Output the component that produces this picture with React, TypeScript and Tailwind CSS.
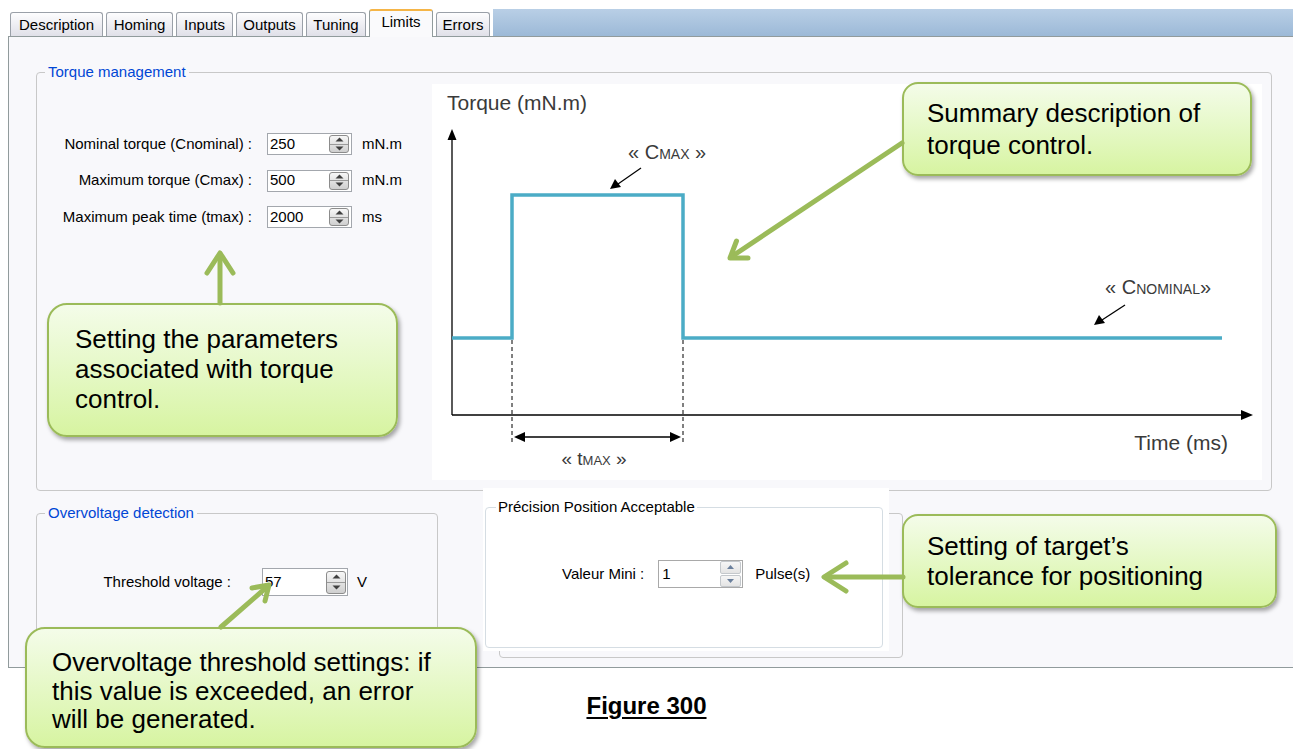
import React from 'react';

const tabs = [
  { label: 'Description', w: 'w-[93px]' },
  { label: 'Homing', w: 'w-[67px]' },
  { label: 'Inputs', w: 'w-[57px]' },
  { label: 'Outputs', w: 'w-[67px]' },
  { label: 'Tuning', w: 'w-[60px]' },
  { label: 'Limits', w: 'w-[64px]', active: true },
  { label: 'Errors', w: 'w-[54px]' },
];

const torqueRows = [
  { label: 'Nominal torque (Cnominal) :', value: '250', unit: 'mN.m' },
  { label: 'Maximum torque (Cmax) :', value: '500', unit: 'mN.m' },
  { label: 'Maximum peak time (tmax) :', value: '2000', unit: 'ms' },
];

function XpSpin({ h = 'h-[18px]' }: { h?: string }) {
  return (
    <div className={`flex ${h} w-[20px] flex-col overflow-hidden rounded-[3px] border border-[#8c8c8c] bg-linear-to-b from-[#f7f7f7] to-[#cfcfcf]`}>
      <div className="flex flex-1 items-center justify-center border-b border-[#9a9a9a]">
        <svg width="9" height="5" viewBox="0 0 9 5">
          <path d="M0.5 4.5 L4.5 0.5 L8.5 4.5 Z" fill="#3f3f3f" />
        </svg>
      </div>
      <div className="flex flex-1 items-center justify-center">
        <svg width="9" height="5" viewBox="0 0 9 5">
          <path d="M0.5 0.5 L4.5 4.5 L8.5 0.5 Z" fill="#3f3f3f" />
        </svg>
      </div>
    </div>
  );
}

function Win7Spin() {
  return (
    <div className="flex h-[26px] w-[21px] flex-col gap-px">
      <div className="flex flex-1 items-center justify-center rounded-[2px] border border-[#c4c8cc] bg-linear-to-b from-[#f6f6f6] to-[#e4e4e4]">
        <svg width="7" height="4" viewBox="0 0 7 4">
          <path d="M0 4 L3.5 0 L7 4 Z" fill="#6a7f9c" />
        </svg>
      </div>
      <div className="flex flex-1 items-center justify-center rounded-[2px] border border-[#c4c8cc] bg-linear-to-b from-[#f6f6f6] to-[#e4e4e4]">
        <svg width="7" height="4" viewBox="0 0 7 4">
          <path d="M0 0 L3.5 4 L7 0 Z" fill="#6a7f9c" />
        </svg>
      </div>
    </div>
  );
}

function Chart() {
  const f = 'Liberation Sans, Arial, sans-serif';
  return (
    <svg width="830" height="396" viewBox="0 0 830 396">
      <text x="15" y="26" fontFamily={f} fontSize="21" fill="#3a3a3a">Torque (mN.m)</text>
      {/* axes */}
      <line x1="20" y1="331" x2="20" y2="52" stroke="#000" strokeWidth="1.3" />
      <polygon points="20,45 15.5,56 24.5,56" fill="#000" />
      <line x1="20" y1="331" x2="810" y2="331" stroke="#000" strokeWidth="1.3" />
      <polygon points="821,331 809,326 809,336" fill="#000" />
      {/* pulse */}
      <polyline points="20,254 80,254 80,111 251,111 251,254 790,254" fill="none" stroke="#4bacc6" strokeWidth="3.5" />
      {/* dashed markers */}
      <line x1="80" y1="256" x2="80" y2="358" stroke="#000" strokeWidth="1" strokeDasharray="4 3" />
      <line x1="251" y1="256" x2="251" y2="358" stroke="#000" strokeWidth="1" strokeDasharray="4 3" />
      <line x1="90" y1="353" x2="241" y2="353" stroke="#000" strokeWidth="1.6" />
      <polygon points="82,353 93,348 93,358" fill="#000" />
      <polygon points="249,353 238,348 238,358" fill="#000" />
      {/* labels */}
      <text x="196" y="75" fontFamily={f} fontSize="20" fill="#3a3a3a">
        « C<tspan fontSize="14">MAX</tspan> »
      </text>
      <line x1="209" y1="84" x2="186" y2="100" stroke="#000" strokeWidth="1.3" />
      <polygon points="178,105 183,95 189,103" fill="#000" />
      <text x="673" y="210" fontFamily={f} fontSize="20" fill="#3a3a3a">
        « C<tspan fontSize="14">NOMINAL</tspan>»
      </text>
      <line x1="693" y1="221" x2="670" y2="236" stroke="#000" strokeWidth="1.3" />
      <polygon points="662,241 667,231 673,239" fill="#000" />
      <text x="162" y="381" textAnchor="middle" fontFamily={f} fontSize="19" fill="#3a3a3a">
        « t<tspan fontSize="13">MAX</tspan> »
      </text>
      <text x="796" y="366" textAnchor="end" fontFamily={f} fontSize="21" fill="#3a3a3a">Time (ms)</text>
    </svg>
  );
}

const callout =
  'absolute rounded-[16px] border-2 border-[#9bbb59] bg-linear-to-b from-[#f4fce9] to-[#d7f4a1] shadow-[2px_3px_4px_rgba(0,0,0,0.35)] text-[26px] text-black';

export default function App() {
  return (
    <div className="relative h-[749px] w-[1293px] overflow-hidden bg-white font-['Liberation_Sans',Arial,sans-serif] text-black">
      {/* tab strip */}
      <div className="flex h-[36px] items-end pl-[10px]">
        {tabs.map((t) =>
          t.active ? (
            <div
              key={t.label}
              className={`${t.w} relative z-10 -mb-px mr-[3px] h-[28px] rounded-t-[3px] border border-b-0 border-[#919b9c] border-t-2 border-t-[#f5b547] bg-[#fafafc] pt-[1px] text-center text-[15px] leading-[20px]`}
            >
              {t.label}
            </div>
          ) : (
            <div
              key={t.label}
              className={`${t.w} mr-[3px] h-[24px] rounded-t-[3px] border border-b-0 border-[#9aa0a8] bg-linear-to-b from-[#fdfdfe] to-[#e0e0e8] text-center text-[15px] leading-[24px]`}
            >
              {t.label}
            </div>
          )
        )}
        <div className="h-[27px] flex-1 bg-linear-to-b from-[#b9cfe6] to-[#9cb9d7]" />
      </div>

      {/* tab page */}
      <div className="ml-[8px] h-[632px] w-[1300px] border border-[#919b9c] bg-[#f8f8fb] pl-[27px] pt-[35px] text-[15px]">
        <div className="relative flex h-[419px] w-[1236px] rounded-[4px] border border-[#c8c8c8]">
          <span className="absolute -top-[10px] left-[8px] bg-[#f8f8fb] px-[3px] leading-[18px] text-[#0046d5]">Torque management</span>
          <div className="flex w-[395px] flex-col gap-y-[14.5px] pt-[60px]">
            {torqueRows.map((r) => (
              <div key={r.label} className="flex h-[22px] items-center">
                <div className="w-[215px] text-right">{r.label}</div>
                <div className="ml-[15px] flex h-[22px] w-[85px] items-center justify-between border border-[#a3a7ad] bg-white pl-[2px] pr-[2px]">
                  <span>{r.value}</span>
                  <XpSpin />
                </div>
                <div className="ml-[10px]">{r.unit}</div>
              </div>
            ))}
          </div>
          <div className="mt-[11px] h-[396px] w-[830px] bg-white">
            <Chart />
          </div>
        </div>

        <div className="mt-[22px] flex">
          <div className="relative h-[145px] w-[402px] rounded-[4px] border border-[#c8c8c8] pt-[54px]">
            <span className="absolute -top-[10px] left-[8px] bg-[#f8f8fb] px-[3px] leading-[18px] text-[#0046d5]">Overvoltage detection</span>
            <div className="flex h-[28px] items-center">
              <div className="w-[194px] text-right">Threshold voltage :</div>
              <div className="ml-[31px] flex h-[28px] w-[86px] items-center justify-between border border-[#a3a7ad] bg-white pl-[2px] pr-[1px]">
                <span>57</span>
                <XpSpin h="h-[23px]" />
              </div>
              <div className="ml-[9px]">V</div>
            </div>
          </div>
          <div className="ml-[61px] h-[145px] w-[404px] rounded-[4px] border border-[#c8c8c8]" />
        </div>
      </div>

      <div className="mt-[26px] text-center text-[24px] font-bold leading-[24px] underline underline-offset-[3px]">Figure 300</div>

      {/* pasted screenshot of the position precision group */}
      <div className="absolute left-[483px] top-[488px] h-[163px] w-[406px] bg-white pl-[2px] pt-[19px] text-[15px]">
        <div className="relative h-[141px] w-[398px] rounded-[4px] border border-[#d5dde3] pt-[52px]">
          <span className="absolute -top-[10px] left-[10px] bg-white px-[2px] leading-[18px]">Précision Position Acceptable</span>
          <div className="flex h-[28px] items-center pl-[76px]">
            <span>Valeur Mini :</span>
            <div className="ml-[14px] flex h-[28px] w-[85px] items-center justify-between border border-[#a9a9a9] bg-white pl-[3px] pr-[1px]">
              <span>1</span>
              <Win7Spin />
            </div>
            <span className="ml-[12px]">Pulse(s)</span>
          </div>
        </div>
      </div>

      {/* callouts */}
      <div className={`${callout} left-[902px] top-[82px] h-[94px] w-[350px] pl-[23px] pt-[13px] leading-[32px]`}>
        Summary description of
        <br />
        torque control.
      </div>
      <div className={`${callout} left-[47px] top-[303px] h-[134px] w-[351px] rounded-[20px] pl-[26px] pt-[19px] leading-[30px]`}>
        Setting the parameters
        <br />
        associated with torque
        <br />
        control.
      </div>
      <div className={`${callout} left-[902px] top-[514px] h-[94px] w-[375px] pl-[23px] pt-[15px] leading-[30px]`}>
        Setting of target’s
        <br />
        tolerance for positioning
      </div>
      <div className={`${callout} left-[25px] top-[627px] h-[121px] w-[452px] rounded-[20px] pl-[25px] pt-[19px] leading-[28.5px]`}>
        Overvoltage threshold settings: if
        <br />
        this value is exceeded, an error
        <br />
        will be generated.
      </div>

      {/* green pointer arrows */}
      <svg className="pointer-events-none absolute left-0 top-0" width="1293" height="749" viewBox="0 0 1293 749">
        <g fill="none" stroke="#9bbb59" strokeWidth="5" strokeLinecap="round" strokeLinejoin="round">
          <line x1="902" y1="143" x2="731" y2="257" />
          <polyline points="748,258 730,258 736.5,241" />
          <line x1="220" y1="303" x2="220" y2="254" />
          <polyline points="207,273 220,253 233,273" />
          <line x1="221" y1="627" x2="268" y2="586" />
          <polyline points="252,588 269,585 265,601" />
          <line x1="903" y1="577" x2="825" y2="577" />
          <polyline points="846,563 824,577 846,591" />
        </g>
      </svg>
    </div>
  );
}
